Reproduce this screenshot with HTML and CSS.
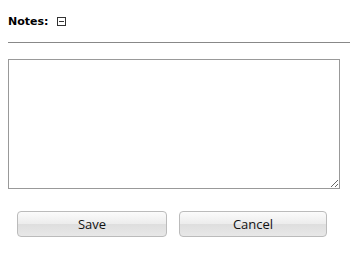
FILE: index.html
```html
<!DOCTYPE html>
<html lang="en">
<head>
    <meta charset="UTF-8">
    <title>Notes</title>
    <link rel="stylesheet" href="styles.css">
</head>
<body>
    <div class="notes">
        <div class="notes-header">
            <span class="notes-label">Notes:</span>
            <span class="collapse-toggle"></span>
        </div>
        <hr class="divider">
        <textarea class="notes-text"></textarea>
        <div class="actions">
            <button class="btn btn-save">Save</button>
            <button class="btn btn-cancel">Cancel</button>
        </div>
    </div>
</body>
</html>
```

FILE: styles.css
```css
* {
    margin: 0;
    padding: 0;
    box-sizing: border-box;
}

body {
    font-family: 'DejaVu Sans', Verdana, sans-serif;
    background-color: #fff;
    color: #000;
    padding: 0 0 0 8px;
    overflow: hidden;
}

.notes-header {
    display: flex;
    align-items: center;
    height: 42px;
    padding-top: 1px;
}

.notes-label {
    font-weight: bold;
    font-size: 11px;
}

.collapse-toggle {
    position: relative;
    width: 9px;
    height: 9px;
    margin-left: 9px;
    border: 1px solid #333;
}

.collapse-toggle::after {
    content: '';
    position: absolute;
    left: 1px;
    right: 1px;
    top: 3px;
    height: 1px;
    background-color: #333;
}

.divider {
    border: none;
    border-top: 1px solid #888;
    height: 0;
    margin-right: -8px;
}

.notes-text {
    display: block;
    width: 332px;
    height: 130px;
    margin-top: 16px;
    border: 1px solid #999;
    resize: both;
    font-family: inherit;
}

.actions {
    display: flex;
    gap: 12px;
    margin-top: 22px;
    padding-left: 9px;
}

.btn {
    height: 26px;
    border: 1px solid #bbb;
    border-radius: 4px;
    background: linear-gradient(#fbfbfb, #ececec 50%, #dedede 51%, #e8e8e8);
    font-family: 'Open Sans', sans-serif;
    font-size: 13px;
    color: #111;
}

.btn-save {
    width: 150px;
}

.btn-cancel {
    width: 148px;
}
```
